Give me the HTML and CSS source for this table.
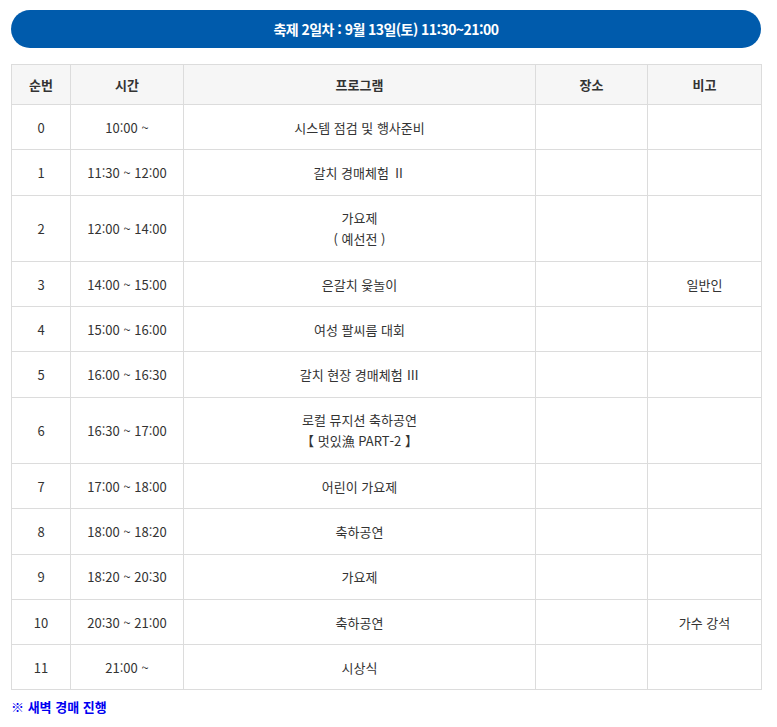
FILE: index.html
```html
<!DOCTYPE html>
<html lang="ko">
<head>
<meta charset="utf-8">
<link rel="stylesheet" href="styles.css">
</head>
<body>
<div class="wrap">
  <div class="banner">축제 2일차 : 9월 13일(토) 11:30~21:00</div>
  <table class="sched">
    <colgroup>
      <col class="c1"><col class="c2"><col class="c3"><col class="c4"><col class="c5">
    </colgroup>
    <thead>
      <tr><th>순번</th><th>시간</th><th>프로그램</th><th>장소</th><th>비고</th></tr>
    </thead>
    <tbody>
      <tr><td>0</td><td>10:00 ~</td><td>시스템 점검 및 행사준비</td><td></td><td></td></tr>
      <tr><td>1</td><td>11:30 ~ 12:00</td><td>갈치 경매체험 Ⅱ</td><td></td><td></td></tr>
      <tr><td>2</td><td>12:00 ~ 14:00</td><td>가요제<br>( 예선전 )</td><td></td><td></td></tr>
      <tr><td>3</td><td>14:00 ~ 15:00</td><td>은갈치 윷놀이</td><td></td><td>일반인</td></tr>
      <tr><td>4</td><td>15:00 ~ 16:00</td><td>여성 팔씨름 대회</td><td></td><td></td></tr>
      <tr><td>5</td><td>16:00 ~ 16:30</td><td>갈치 현장 경매체험 Ⅲ</td><td></td><td></td></tr>
      <tr><td>6</td><td>16:30 ~ 17:00</td><td>로컬 뮤지션 축하공연<br>【 멋있漁 PART-2 】</td><td></td><td></td></tr>
      <tr><td>7</td><td>17:00 ~ 18:00</td><td>어린이 가요제</td><td></td><td></td></tr>
      <tr><td>8</td><td>18:00 ~ 18:20</td><td>축하공연</td><td></td><td></td></tr>
      <tr><td>9</td><td>18:20 ~ 20:30</td><td>가요제</td><td></td><td></td></tr>
      <tr><td>10</td><td>20:30 ~ 21:00</td><td>축하공연</td><td></td><td>가수 강석</td></tr>
      <tr><td>11</td><td>21:00 ~</td><td>시상식</td><td></td><td></td></tr>
    </tbody>
  </table>
  <p class="note">※ 새벽 경매 진행</p>
</div>
</body>
</html>
```
FILE: styles.css
```css
html, body {
  margin: 0;
  padding: 0;
  background: #fff;
}
body {
  font-family: "Noto Sans CJK KR", "Noto Sans", sans-serif;
  color: #333;
}
.wrap {
  padding: 10px 16px 0 11px;
}
.banner {
  height: 38px;
  line-height: 38px;
  border-radius: 19px;
  background: #005bac;
  color: #fff;
  font-weight: 700;
  font-size: 14px;
  text-align: center;
  letter-spacing: -0.55px;
}
.sched {
  margin-top: 16px;
  width: 750px;
  border-collapse: collapse;
  table-layout: fixed;
  font-size: 13px;
}
.c1 { width: 59px; }
.c2 { width: 113px; }
.c3 { width: 352px; }
.c4 { width: 112px; }
.c5 { width: 114px; }
.sched th, .sched td {
  border: 1px solid #dcdcdc;
  text-align: center;
  vertical-align: middle;
  padding: 0 4px;
}
.sched th {
  background: #f6f6f6;
  font-weight: 700;
  height: 39px;
  color: #333;
}
.sched td {
  padding-top: 11.7px;
  padding-bottom: 11.6px;
  line-height: 21px;
  color: #333;
}
.note {
  margin: 6px 0 0 0;
  color: #0000f0;
  font-weight: 700;
  font-size: 13px;
  line-height: 22px;
}
```
